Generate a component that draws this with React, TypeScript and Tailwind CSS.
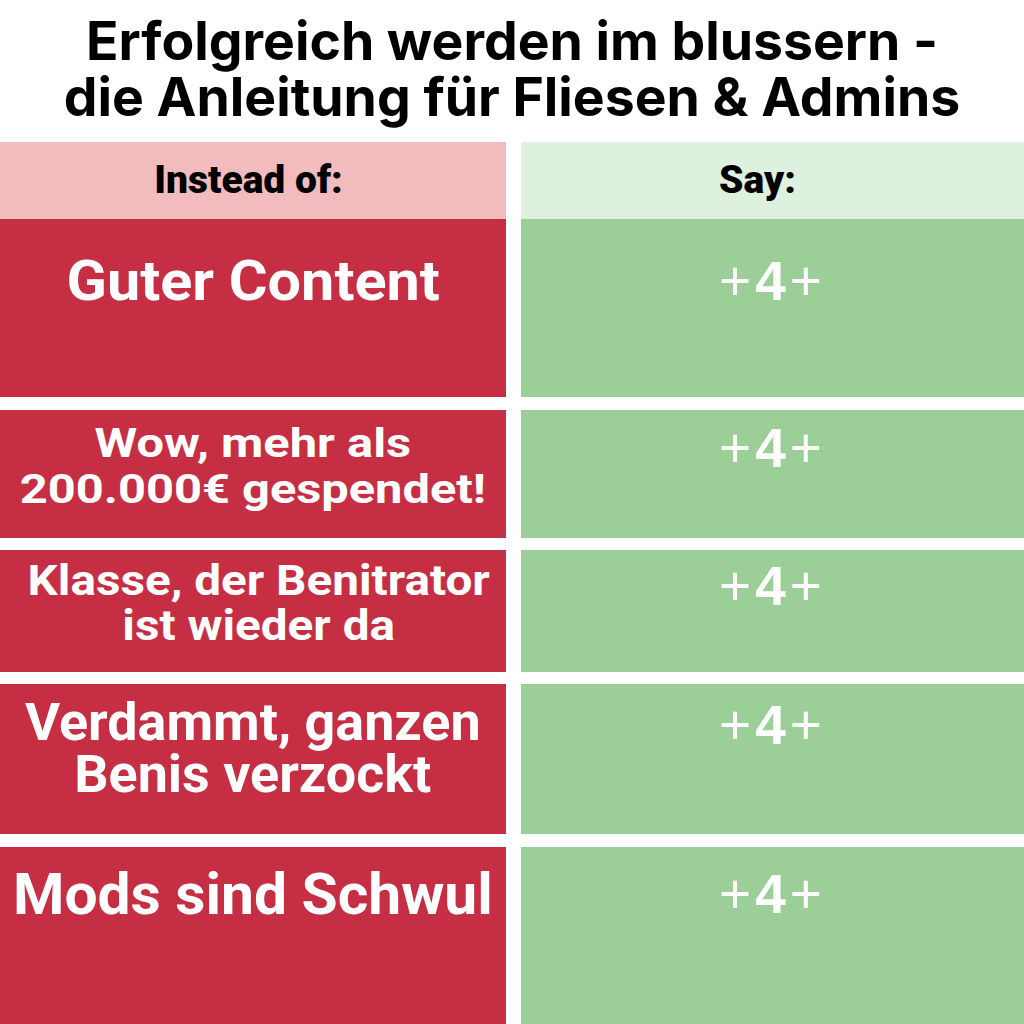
const rows = [
  {
    h: "h-[178px]",
    mt: "mt-0",
    lpad: "pt-[34px]",
    text: "text-[56px] leading-[56px]",
    scale: "scale-x-[1.06]",
    lines: ["Guter Content"],
    rpad: "pt-[35px]",
  },
  {
    h: "h-[128px]",
    mt: "mt-[13px]",
    lpad: "pt-[10px]",
    text: "text-[41px] leading-[46px]",
    scale: "scale-x-[1.19]",
    lines: ["Wow, mehr als", "200.000€ gespendet!"],
    rpad: "pt-[11px]",
  },
  {
    h: "h-[122px]",
    mt: "mt-[12px]",
    lpad: "pt-[8px] pl-[12px]",
    text: "text-[42px] leading-[45px]",
    scale: "scale-x-[1.135]",
    lines: ["Klasse, der Benitrator", "ist wieder da"],
    rpad: "pt-[9px]",
  },
  {
    h: "h-[150px]",
    mt: "mt-[12px]",
    lpad: "pt-[13px]",
    text: "text-[51px] leading-[52px]",
    scale: "scale-x-[1.056]",
    lines: ["Verdammt, ganzen", "Benis verzockt"],
    rpad: "pt-[14px]",
  },
  {
    h: "h-[177px]",
    mt: "mt-[13px]",
    lpad: "pt-[19px]",
    text: "text-[57px] leading-[57px]",
    scale: "scale-x-[1.03]",
    lines: ["Mods sind Schwul"],
    rpad: "pt-[20px]",
  },
];

export default function App() {
  return (
    <div className="w-[1024px] h-[1024px] bg-white overflow-hidden flex flex-col">
      <div className="h-[142px] pt-[13px] text-center text-black font-bold text-[53.5px] leading-[56px] font-['Inter',sans-serif]">
        <div>Erfolgreich werden im blussern -</div>
        <div>die Anleitung für Fliesen &amp; Admins</div>
      </div>
      <div className="grid grid-cols-[506px_503px] gap-x-[15px] h-[77px] font-['Roboto',sans-serif] font-black text-[39px] leading-[39px] text-black">
        <div className="bg-[#f2bcbe] flex items-center justify-center pr-[9px]">Instead of:</div>
        <div className="bg-[#def0de] flex items-center justify-center pr-[30px]">Say:</div>
      </div>
      {rows.map((r, i) => (
        <div key={i} className={`grid grid-cols-[506px_503px] gap-x-[15px] ${r.h} ${r.mt}`}>
          <div className={`bg-[#c62f43] text-white text-center font-bold font-['Roboto',sans-serif] ${r.text} ${r.lpad}`}>
            <span className={`inline-block ${r.scale}`}>
              {r.lines.map((l, j) => (
                <span key={j} className="block whitespace-nowrap">{l}</span>
              ))}
            </span>
          </div>
          <div className={`bg-[#9bcf97] text-white text-center font-['Liberation_Sans',Arial,sans-serif] text-[55px] leading-[55px] tracking-[4px] ${r.rpad}`}>
            <span className="font-normal">+</span>
            <span className="font-bold">4</span>
            <span className="font-normal">+</span>
          </div>
        </div>
      ))}
    </div>
  );
}
